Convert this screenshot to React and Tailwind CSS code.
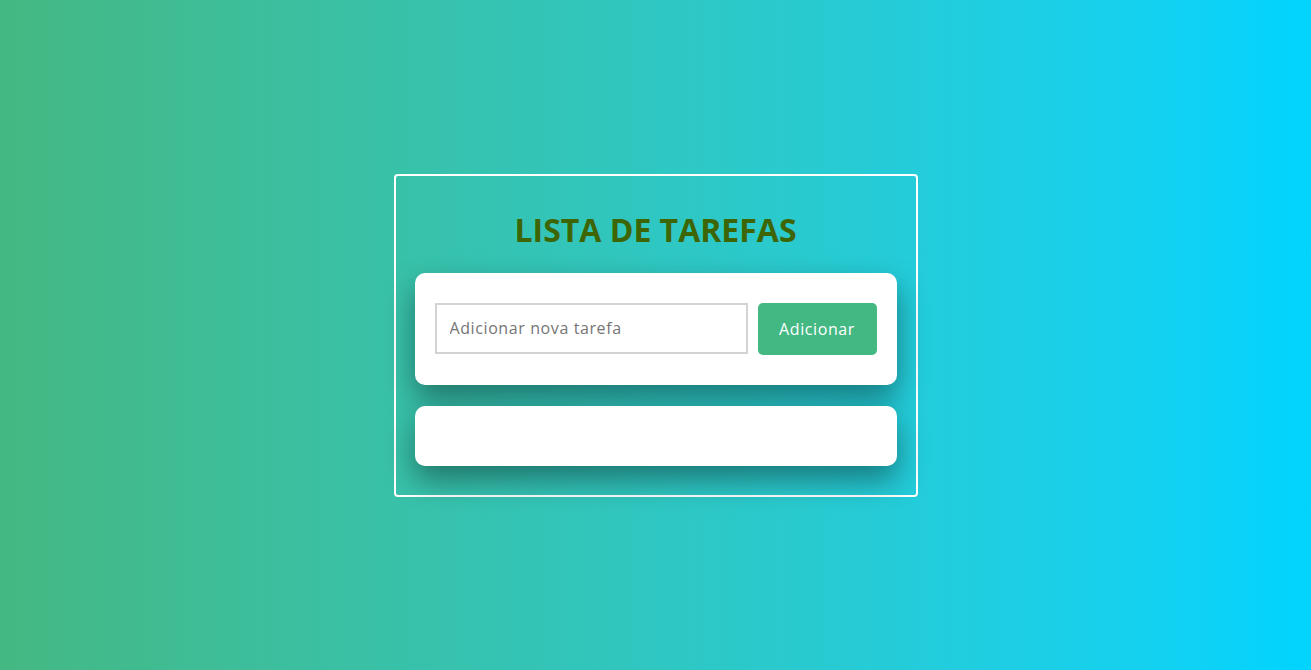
export default function App() {
  return (
    <div
      className="h-[670px] w-full flex items-center justify-center bg-gradient-to-r from-[#44b882] to-[#00d4ff]"
      style={{ fontFamily: '"Open Sans", "Noto Sans", sans-serif' }}
    >
      <div className="w-[524px] border-2 border-white rounded-[4px] px-[19px] pt-[30px] pb-[29px]">
        <h1 className="text-center text-[32px] leading-[48px] font-bold text-[#3e6504] mb-[19px]">
          LISTA DE TAREFAS
        </h1>
        <div className="bg-white rounded-[10px] px-5 py-[30px] flex gap-[10px] shadow-[0_14px_30px_rgba(0,0,0,0.4)]">
          <input
            type="text"
            placeholder="Adicionar nova tarefa"
            className="flex-1 min-w-0 h-[51px] border-2 border-[#d3d3d3] px-[13px] text-[16px] tracking-[0.6px] text-[#333] placeholder:text-[#757575] outline-none"
          />
          <button className="w-[119px] h-[52px] bg-[#43b883] rounded-[5px] text-white text-[16px] tracking-[0.6px]">
            Adicionar
          </button>
        </div>
        <div className="mt-[21px] h-[60px] bg-white rounded-[10px] shadow-[0_14px_30px_rgba(0,0,0,0.4)]"></div>
      </div>
    </div>
  );
}
